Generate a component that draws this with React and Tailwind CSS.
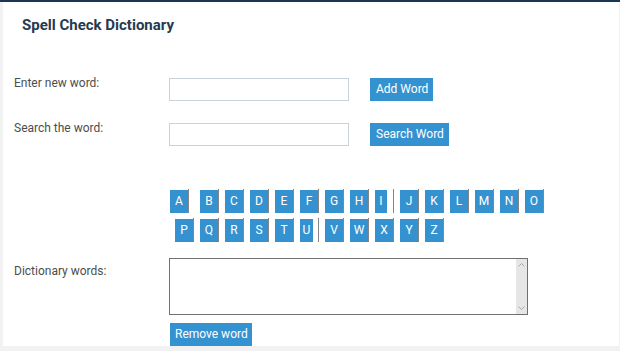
import { useState } from 'react'

const ROW1 = ['A', 'B', 'C', 'D', 'E', 'F', 'G', 'H', 'I', 'J', 'K', 'L', 'M', 'N', 'O']
const ROW2 = ['P', 'Q', 'R', 'S', 'T', 'U', 'V', 'W', 'X', 'Y', 'Z']

function Letter({ ch, onPick, className = '' }) {
  const narrow = ch === 'I' ? 'w-[12px]' : ch === 'U' ? 'w-[13px]' : 'w-full'
  return (
    <div className={`w-[19px] h-[24px] pt-[1px] border-r border-[#858585] ${className}`}>
      <button
        onClick={() => onPick(ch)}
        className={`${narrow} h-[23px] bg-[#3592d0] text-white text-[12px] leading-[23px] text-center block`}
      >
        {ch}
      </button>
    </div>
  )
}

export default function App() {
  const [word, setWord] = useState('')
  const [search, setSearch] = useState('')
  const [words, setWords] = useState([])

  return (
    <div className="w-[620px] h-[351px] bg-[#f2f2f2] border-t-2 border-[#1b3654] font-['Roboto',sans-serif]">
      <div className="ml-[3px] mr-[1px] h-[344px] bg-white">
        <h1 className="pl-[19px] pt-[13px] text-[15px] leading-[20px] font-bold text-[#253a50]">Spell Check Dictionary</h1>

        <div className="flex items-start mt-[43px]">
          <label className="w-[166px] pl-[11px] -mt-[3px] text-[12px] leading-[16px] text-[#4d4d4d]">Enter new word:</label>
          <input
            value={word}
            onChange={e => setWord(e.target.value)}
            className="w-[180px] h-[23px] border border-[#c9d1d9] outline-none px-1 text-[12px]"
          />
          <button
            onClick={() => { if (word) setWords(w => [...w, word]); setWord('') }}
            className="ml-[21px] h-[23px] pl-[6px] pr-[5px] bg-[#3592d0] text-white text-[12px] leading-[23px]"
          >
            Add Word
          </button>
        </div>

        <div className="flex items-start mt-[22px]">
          <label className="w-[166px] pl-[11px] -mt-[3px] text-[12px] leading-[16px] text-[#4d4d4d]">Search the word:</label>
          <input
            value={search}
            onChange={e => setSearch(e.target.value)}
            className="w-[180px] h-[23px] border border-[#c9d1d9] outline-none px-1 text-[12px]"
          />
          <button className="ml-[21px] h-[23px] pl-[6px] pr-[5px] bg-[#3592d0] text-white text-[12px] leading-[23px]">
            Search Word
          </button>
        </div>

        <div className="mt-[43px] flex flex-col gap-[5px]">
          <div className="flex gap-[6px] pl-[167px]">
            {ROW1.map(ch => (
              <Letter key={ch} ch={ch} onPick={setSearch} className={ch === 'B' ? 'ml-[5px]' : ''} />
            ))}
          </div>
          <div className="flex gap-[6px] pl-[172px]">
            {ROW2.map(ch => (
              <Letter key={ch} ch={ch} onPick={setSearch} />
            ))}
          </div>
        </div>

        <div className="flex items-start mt-[16px]">
          <label className="w-[166px] pl-[11px] pt-[5px] text-[12px] leading-[16px] text-[#4d4d4d]">Dictionary words:</label>
          <div className="w-[359px] h-[57px] border border-[#707070] flex">
            <textarea
              readOnly
              value={words.join('\n')}
              className="flex-1 resize-none outline-none text-[12px] px-1"
            />
            <div className="w-[11px] bg-[#e6e6e6] flex flex-col justify-between items-center py-[4px]">
              <svg width="7" height="4" viewBox="0 0 7 4">
                <polyline points="0.5,3.5 3.5,0.5 6.5,3.5" fill="none" stroke="#a8a8a8" strokeWidth="1" />
              </svg>
              <svg width="7" height="4" viewBox="0 0 7 4">
                <polyline points="0.5,0.5 3.5,3.5 6.5,0.5" fill="none" stroke="#a8a8a8" strokeWidth="1" />
              </svg>
            </div>
          </div>
        </div>

        <div className="pl-[167px] mt-[6px]">
          <button
            onClick={() => setWords(w => w.slice(0, -1))}
            className="h-[23px] pl-[5px] pr-[4px] bg-[#3592d0] text-white text-[12px] leading-[23px]"
          >
            Remove word
          </button>
        </div>
      </div>
    </div>
  )
}
